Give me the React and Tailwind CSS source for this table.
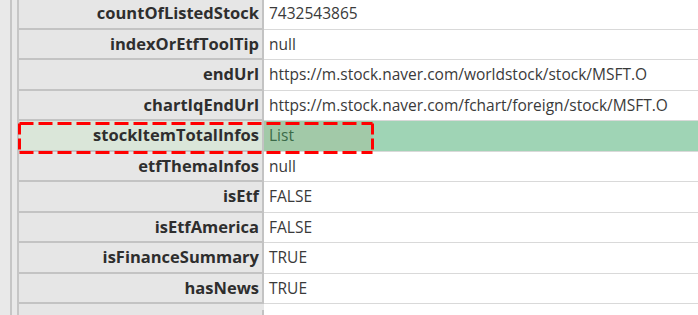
import React from 'react';

const rows = [
  ['countOfListedStock', '7432543865'],
  ['indexOrEtfToolTip', 'null'],
  ['endUrl', 'https://m.stock.naver.com/worldstock/stock/MSFT.O'],
  ['chartIqEndUrl', 'https://m.stock.naver.com/fchart/foreign/stock/MSFT.O'],
  ['stockItemTotalInfos', 'List', true],
  ['etfThemaInfos', 'null'],
  ['isEtf', 'FALSE'],
  ['isEtfAmerica', 'FALSE'],
  ['isFinanceSummary', 'TRUE'],
  ['hasNews', 'TRUE'],
  ['isUsStockEndUrl', ''],
];

export default function App() {
  return (
    <div className="w-[698px] h-[315px] overflow-hidden bg-[#e6e6e6] flex" style={{ fontFamily: '"Open Sans", "Liberation Sans", sans-serif' }}>
      {/* row header strip */}
      <div className="w-[12px] shrink-0 bg-[#e9e9e9] border-r-2 border-[#c6c6c6]" />
      <div className="w-[7px] shrink-0 bg-[#e9e9e9] border-r-2 border-[#c6c6c6]" />

      <div className="flex-1 flex flex-col -mt-[1px]">
        {rows.map(([label, value, hl], i) => (
          <div key={label} className={`relative flex shrink-0 ${i % 2 === 0 ? 'h-[31px]' : 'h-[30px]'}`}>
            <div
              className={`w-[245px] shrink-0 flex justify-end pr-[3px] border-b-2 border-r-2 border-[#c3c3c3] text-[16.5px] font-bold text-[#2e2e2e] ${
                hl ? 'bg-[#dae6d9]' : 'bg-[#e6e6e6]'
              } ${i === rows.length - 1 ? 'items-end translate-y-[6px]' : 'items-center'}`}
            >
              {label}
            </div>
            <div
              className={`flex-1 flex items-center pl-[5px] border-b border-[#d9d9d9] text-[15.5px] ${
                hl ? 'bg-[#9fd4b5] text-[#3b6b48]' : 'bg-white text-[#3a3a3a]'
              }`}
            >
              {hl ? (
                <div className="-ml-[5px] pl-[5px] w-[109px] h-full flex items-center bg-[#a2c9a8]">{value}</div>
              ) : (
                value
              )}
            </div>
            {hl && (
              <svg className="absolute z-10 -left-[1px] top-[1px] pointer-events-none" width="356" height="32" viewBox="0 0 356 32">
                <path d="M1.5 1.5 H354.5" fill="none" stroke="#ff0000" strokeWidth="3" strokeDasharray="14 5" />
                <path d="M1.5 30.5 H354.5" fill="none" stroke="#ff0000" strokeWidth="3" strokeDasharray="14 5" />
                <path d="M1.5 1.5 V30.5" fill="none" stroke="#ff0000" strokeWidth="3" strokeDasharray="11 4" />
                <path d="M354.5 1.5 V30.5" fill="none" stroke="#ff0000" strokeWidth="3" strokeDasharray="11 4" />
              </svg>
            )}
          </div>
        ))}
      </div>
    </div>
  );
}
